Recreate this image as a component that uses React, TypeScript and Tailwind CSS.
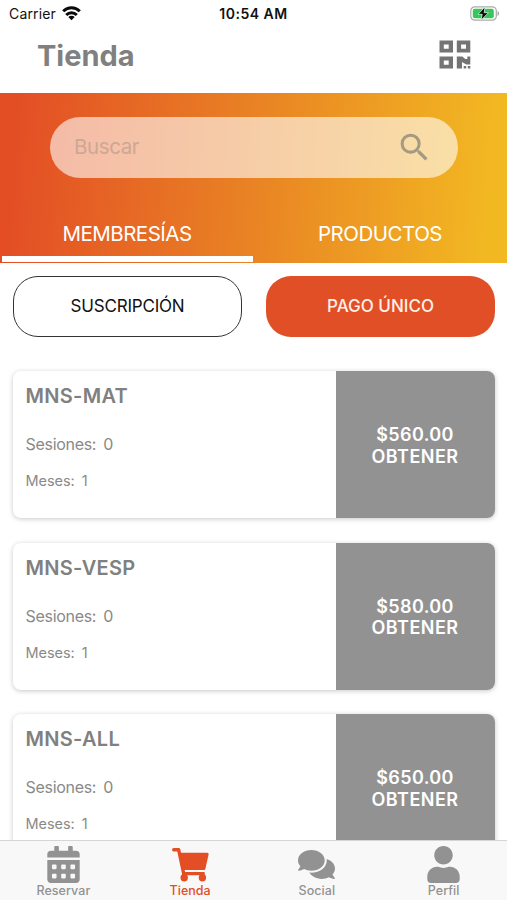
import type { ReactNode } from "react";
import { FaCalendarAlt, FaComments, FaUser } from "react-icons/fa";
import { MdSearch } from "react-icons/md";

const plans = [
  { name: "MNS-MAT", price: "$560.00" },
  { name: "MNS-VESP", price: "$580.00" },
  { name: "MNS-ALL", price: "$650.00" },
];

function QrIcon() {
  return (
    <svg width="32" height="29" viewBox="0 0 32 29" fill="currentColor">
      <path fillRule="evenodd" d="M.5.500h13.500v12H.500zM4.800 4.500v4.200h4.900V4.500zM17.800.500h13.500v12H17.800zM22.100 4.500v4.200H27V4.500zM.500 16.500h13.500v12H.500zM4.800 20.500v4.200h4.900v-4.200z" />
      <path d="M17.800 16.500h5.500l3 2.500h2v-2.500h3v8h-4l-4.300-2.500v6.500h-5.200zM24.700 26h2.500v2.500h-2.500zM28.800 26h2.500v2.500h-2.500z" />
    </svg>
  );
}

function CartIcon() {
  return (
    <svg width="40" height="37" viewBox="0 0 40 37" fill="currentColor">
      <path d="M3.700 3.800h5l5 23.800h19.500" fill="none" stroke="currentColor" strokeWidth="3.400" strokeLinecap="round" strokeLinejoin="round" />
      <path d="M9.500 6.800h27.700c1 0 1.600.8 1.400 1.700l-3.200 14.200c-.2.900-.7 1.300-1.600 1.300H13z" />
      <circle cx="14.200" cy="31.700" r="3.700" />
      <circle cx="32.400" cy="31.700" r="3.700" />
      <path d="M12 26h4v5h-4zM30.800 26h3.500v5h-3.500z" />
    </svg>
  );
}

function StatusBar() {
  return (
    <div className="grid h-7 grid-cols-3 items-center pl-[9px] pr-[7px] text-[14px] leading-none text-[#111]">
      <div className="flex items-center gap-1.5">
        <span className="tracking-[0.15px]">Carrier</span>
        <svg className="-mt-0.5" width="19" height="15" viewBox="0 0 19 15" fill="none" stroke="#0a0a0a" strokeWidth="3">
          <path d="M1.200 5.300C6 .6 13 .6 17.800 5.300M4.200 9c3-3 7.600-3 10.600 0" />
          <path d="M9.500 14.200 6.300 11c1.900-1.700 4.500-1.700 6.400 0z" fill="#0a0a0a" stroke="none" />
        </svg>
      </div>
      <span className="-ml-0.5 whitespace-nowrap text-center font-semibold tracking-[0.5px]">10:54 AM</span>
      <svg className="-mt-0.5 justify-self-end" width="30" height="15" viewBox="0 0 30 15">
        <rect x=".8" y=".8" width="25.500" height="13.400" rx="4" fill="#fff" stroke="#aaa" strokeWidth="1.200" />
        <rect x="2.800" y="2.700" width="21" height="9.600" rx="2" fill="#36c75b" />
        <path d="M27.500 5v5c2.200-.9 2.200-4.100 0-5" fill="#aaa" />
        <path d="M15 .8 8 8.300h4.200L11 14.200l7.500-7.500h-4.300z" fill="#0a0a0a" stroke="#d8f5df" strokeWidth=".8" />
      </svg>
    </div>
  );
}

function PlanCard({ name, price }: { name: string; price: string }) {
  return (
    <article className="flex h-[147px] shrink-0 overflow-hidden rounded-[8px] bg-white shadow-[0_1px_5px_rgba(0,0,0,0.22)]">
      <div className="flex-1 pl-[13px] pt-[12px] text-[#898989]">
        <h2 className="text-[20px] font-semibold leading-[26px] tracking-[0.3px] text-[#808080]">{name}</h2>
        <p className="mt-[25px] text-[16px] leading-[20px] tracking-[-0.3px]">Sesiones:<span className="ml-[7px]">0</span></p>
        <p className="mt-[17px] text-[14.500px] leading-[20px] tracking-[-0.05px]">Meses:<span className="ml-[7px]">1</span></p>
      </div>
      <button className="flex w-[159px] flex-col items-center justify-center bg-[#929292] pt-[2px] text-[18px] font-semibold leading-[21.500px] text-white">
        <span className="tracking-[0.35px]">{price}</span>
        <span className="tracking-[0.45px]">OBTENER</span>
      </button>
    </article>
  );
}

function NavItem({ icon, label, active = false }: { icon: ReactNode; label: string; active?: boolean }) {
  return (
    <div className={active ? "flex flex-1 flex-col items-center text-[#e34e25]" : "flex flex-1 flex-col items-center text-[#929292]"}>
      <div className="mt-1 flex h-[38px] items-center justify-center">{icon}</div>
      <span className="text-[12.500px] font-medium leading-[15px] tracking-[0.05px]">{label}</span>
    </div>
  );
}

export default function App() {
  return (
    <main className="flex h-[900px] w-[507px] flex-col overflow-hidden bg-white font-[Inter,'Liberation_Sans',sans-serif]">
      <header className="h-[92.500px] shrink-0">
        <StatusBar />
        <div className="flex items-center justify-between pl-[37px] pr-[36px] pt-[8px] text-[#808080]">
          <h1 className="text-[29px] font-bold leading-[40px]">Tienda</h1>
          <div className="-mt-1 text-[#747474]"><QrIcon /></div>
        </div>
      </header>

      <section className="flex h-[170.500px] shrink-0 flex-col bg-linear-[94deg,#e34e25_3%,#e98324_50%,#f2b822_96%] pt-[24.500px]">
        <label className="ml-[50px] mr-[49px] flex h-[61px] shrink-0 items-center justify-between rounded-full bg-white/60 pl-[24px] pr-[25px]">
          <span className="text-[20.500px] leading-none tracking-[-0.4px] text-[#cda795]">Buscar</span>
          <MdSearch className="size-[37px] text-[#a39a82]" />
        </label>
        <nav className="flex flex-1 text-center text-[20.500px] leading-[26px] tracking-[-0.5px] text-white">
          <div className="ml-[2px] flex w-[251px] flex-col justify-end">
            <span className="mb-[9px] pr-px">MEMBRESÍAS</span>
            <div className="mb-px h-[6px] bg-white" />
          </div>
          <div className="flex flex-1 flex-col justify-end">
            <span className="mb-[16px]">PRODUCTOS</span>
          </div>
        </nav>
      </section>

      <div className="grid shrink-0 grid-cols-2 gap-6 pl-[13px] pr-[12px] pt-[13px] text-[17px]">
        <button className="h-[61px] rounded-[25px] border-[1.500px] border-[#333] pt-px tracking-[-0.2px] text-[#111]">SUSCRIPCIÓN</button>
        <button className="h-[61px] rounded-[25px] bg-[#e14f26] pt-px font-medium text-[#fff0e8]">PAGO ÚNICO</button>
      </div>

      <section className="flex min-h-0 flex-1 flex-col gap-[24.500px] overflow-hidden px-[12.500px] pt-[34px]">
        {plans.map((plan) => <PlanCard key={plan.name} {...plan} />)}
      </section>

      <nav className="flex h-[60px] shrink-0 border-t border-[#d5d5d5] bg-[#f8f8f8]">
        <NavItem icon={<FaCalendarAlt className="size-[37px]" />} label="Reservar" />
        <NavItem icon={<CartIcon />} label="Tienda" active />
        <NavItem icon={<FaComments className="size-[37px]" />} label="Social" />
        <NavItem icon={<FaUser className="size-[37px]" />} label="Perfil" />
      </nav>
    </main>
  );
}
